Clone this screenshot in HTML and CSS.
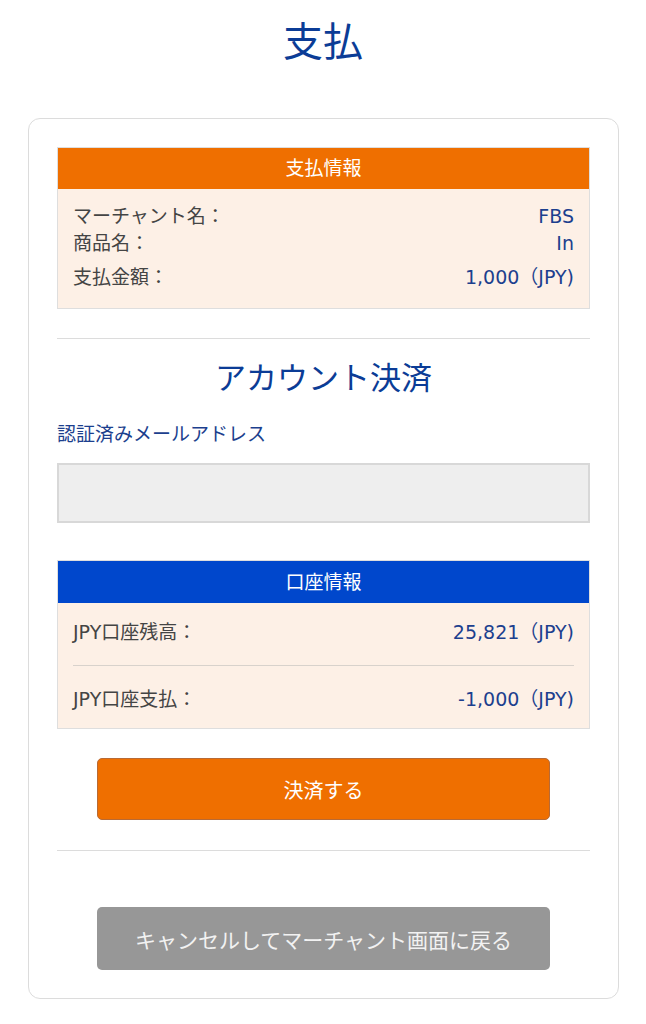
FILE: index.html
```html
<!DOCTYPE html>
<html lang="ja">
<head>
<meta charset="utf-8">
<link rel="stylesheet" href="styles.css">
</head>
<body>
<h1 class="title">支払</h1>
<div class="card">
  <div class="panel">
    <div class="panel-head orange">支払情報</div>
    <div class="panel-body info">
      <div class="row r1"><span class="label">マーチャント名：</span><span class="value">FBS</span></div>
      <div class="row"><span class="label">商品名：</span><span class="value">In</span></div>
      <div class="row r3"><span class="label">支払金額：</span><span class="value">1,000（JPY)</span></div>
    </div>
  </div>
  <hr class="divider d1">
  <h2 class="subtitle">アカウント決済</h2>
  <div class="field-label">認証済みメールアドレス</div>
  <div class="input"></div>
  <div class="panel p2">
    <div class="panel-head blue">口座情報</div>
    <div class="panel-body acct">
      <div class="arow first"><span class="label">JPY口座残高：</span><span class="value">25,821（JPY)</span></div>
      <div class="arow second"><span class="label">JPY口座支払：</span><span class="value">-1,000（JPY)</span></div>
    </div>
  </div>
  <div class="btn pay">決済する</div>
  <hr class="divider d2">
  <div class="btn cancel">キャンセルしてマーチャント画面に戻る</div>
</div>
</body>
</html>
```
FILE: styles.css
```css
* { box-sizing: border-box; }
body {
  margin: 0;
  background: #fff;
  font-family: "DejaVu Sans", "Noto Sans CJK JP", sans-serif;
  color: #444;
}
.title {
  margin: 0;
  padding-top: 19px;
  font-size: 40px;
  line-height: 46px;
  font-weight: 400;
  text-align: center;
  color: #0b3c96;
}
.card {
  margin: 53px 27px 0 28px;
  border: 1px solid #dcdcdc;
  border-radius: 12px;
  padding: 28px 28px 28px 28px;
}
.panel {
  border: 1px solid #dedede;
  background: #fdf0e6;
}
.panel-head {
  height: 41px;
  line-height: 41px;
  text-align: center;
  color: #fff;
  font-size: 19px;
}
.panel-head.orange { background: #ef6f00; }
.panel-head.blue { background: #0047cc; height: 42px; line-height: 42px; }
.info { padding: 14px 15px 17px 15px; }
.row {
  display: flex;
  justify-content: space-between;
  font-size: 19px;
  line-height: 27px;
}
.row.r3 { margin-top: 7px; }
.label { color: #444; }
.value { color: #1c3f8e; }
.divider {
  border: 0;
  border-top: 1px solid #dcdcdc;
  margin: 0;
}
.d1 { margin-top: 29px; }
.subtitle {
  margin: 19px 0 0;
  font-size: 31px;
  line-height: 40px;
  font-weight: 400;
  text-align: center;
  color: #0b3c96;
}
.field-label {
  margin-top: 24px;
  font-size: 19px;
  line-height: 24px;
  color: #1c3f8e;
}
.input {
  margin-top: 17px;
  height: 60px;
  background: #eeeeee;
  border: 2px solid #d8d8d8;
}
.p2 { margin-top: 37px; }
.acct { padding: 0 15px; }
.arow {
  display: flex;
  justify-content: space-between;
  font-size: 19px;
  line-height: 24px;
}
.arow.first { padding: 17px 0 21px; }
.arow.second { padding: 21px 0 17px; border-top: 1px solid #d8d2cc; }
.btn {
  margin: 0 40px;
  height: 62px;
  border-radius: 5px;
  display: flex;
  align-items: center;
  justify-content: center;
}
.pay {
  margin-top: 29px;
  background: #ef6f00;
  border: 1px solid #b86a35;
  color: #fff;
  font-size: 20px;
}
.d2 { margin-top: 30px; }
.cancel {
  margin-top: 56px;
  height: 63px;
  background: #979797;
  color: #f2f2f2;
  font-size: 21px;
}
```
